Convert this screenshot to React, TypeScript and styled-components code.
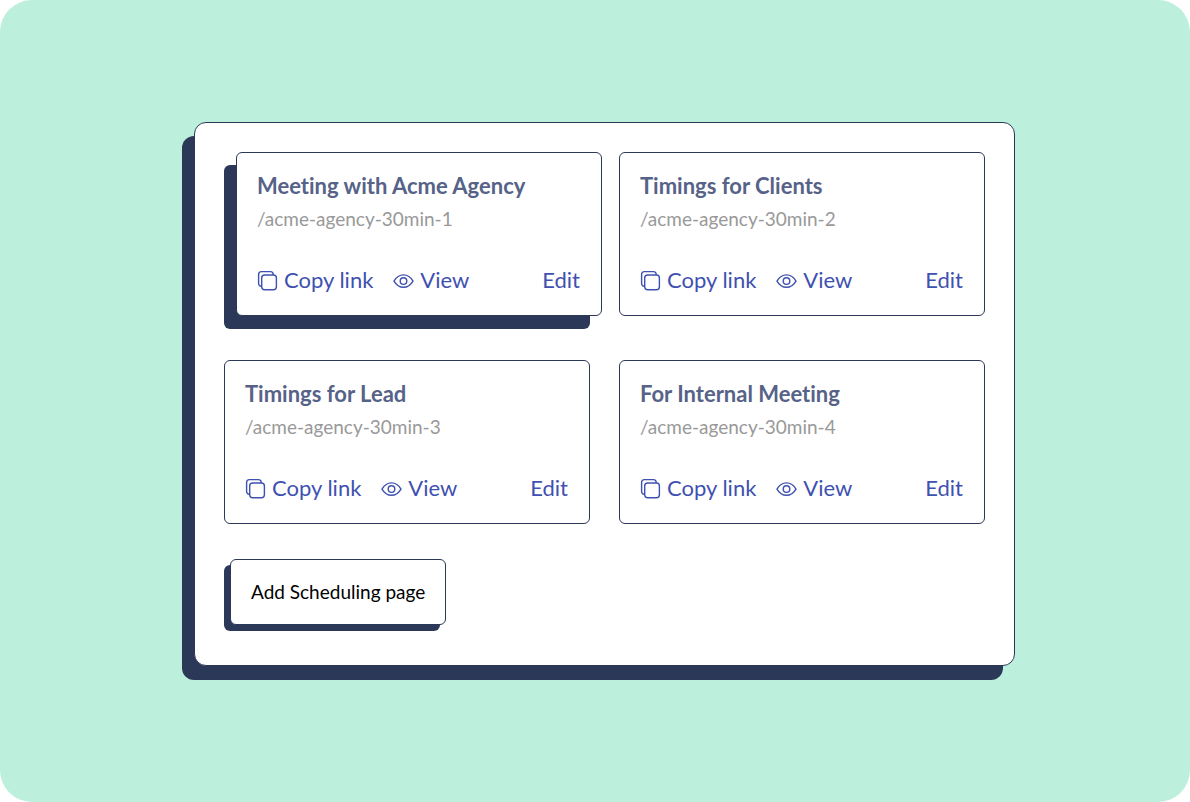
import React from "react";
import styled, { createGlobalStyle, css } from "styled-components";

const navy = "#2c3857";

const GlobalStyle = createGlobalStyle`
  *, *::before, *::after { box-sizing: border-box; }
  body { margin: 0; background: #ffffff; }
  body, button {
    font-family: Lato, "Open Sans", sans-serif;
    font-variant-ligatures: none;
  }
`;

const Page = styled.main`
  display: flex;
  align-items: flex-start;
  min-height: 100vh;
  padding: 122px 175px 136px 194px;
  border-radius: 32px;
  background: #bcf0dd;
`;

const Panel = styled.section`
  flex: 1;
  padding: 29px 29px 40px;
  border: 1px solid ${navy};
  border-radius: 12px;
  background: #ffffff;
  box-shadow: -12px 14px 0 ${navy};
`;

const CardGrid = styled.div`
  display: grid;
  grid-template-columns: repeat(2, minmax(0, 1fr));
  gap: 44px 29px;
`;

const Card = styled.article<{ $raised?: boolean }>`
  padding: 19px 21px 19px 20px;
  border: 1px solid ${navy};
  border-radius: 6px;
  background: #ffffff;
  ${({ $raised }) =>
    $raised &&
    css`
      margin: 0 -12px 0 12px;
      box-shadow: -12px 13px 0 ${navy};
    `}
`;

const CardTitle = styled.h2`
  margin: 0;
  color: #566287;
  font-size: 22px;
  line-height: 28px;
  font-weight: 700;
`;

const CardPath = styled.p`
  margin: 6px 0 32px;
  color: #999999;
  font-size: 19px;
  line-height: 26px;
`;

const Actions = styled.div`
  display: flex;
  align-items: center;
  gap: 20px;
`;

const Action = styled.button<{ $end?: boolean }>`
  display: flex;
  align-items: center;
  gap: 6px;
  margin-left: ${({ $end }) => ($end ? "auto" : "0")};
  padding: 0;
  border: 0;
  background: none;
  color: #3f51b0;
  font-size: 22px;
  line-height: 32px;
  cursor: pointer;

  svg { display: block; flex: none; }
`;

const AddButton = styled.button`
  display: block;
  margin: 35px 0 0 6px;
  padding: 19px 20px;
  border: 1px solid ${navy};
  border-radius: 6px;
  background: #ffffff;
  box-shadow: -6px 6px 0 ${navy};
  color: #000000;
  font-size: 19px;
  line-height: 26px;
  cursor: pointer;
`;

const CopyIcon = () => (
  <svg width="21" height="22" viewBox="0 0 21 22" fill="none" stroke="currentColor" strokeWidth="1.4" aria-hidden="true">
    <rect x="4.7" y="6" width="14.7" height="14.7" rx="3" />
    <path d="M4.7 17.2H4.2A2.6 2.6 0 0 1 1.6 14.6V5.4A2.8 2.8 0 0 1 4.4 2.6H13.4A2.8 2.8 0 0 1 16.2 5.4V6" />
  </svg>
);

const EyeIcon = () => (
  <svg width="21" height="22" viewBox="0 0 21 22" fill="none" stroke="currentColor" strokeWidth="1.4" aria-hidden="true">
    <path d="M1 12.1C3.4 8 6.7 5.9 10.5 5.9S17.6 8 20 12.1C17.6 16.2 14.3 18.3 10.5 18.3S3.4 16.2 1 12.1Z" />
    <circle cx="10.5" cy="12.1" r="3.3" />
  </svg>
);

const pages = [
  { title: "Meeting with Acme Agency", path: "/acme-agency-30min-1", raised: true },
  { title: "Timings for Clients", path: "/acme-agency-30min-2" },
  { title: "Timings for Lead", path: "/acme-agency-30min-3" },
  { title: "For Internal Meeting", path: "/acme-agency-30min-4" },
];

export default function App() {
  return (
    <>
      <GlobalStyle />
      <Page>
        <Panel>
          <CardGrid>
            {pages.map((page) => (
              <Card key={page.path} $raised={page.raised}>
                <CardTitle>{page.title}</CardTitle>
                <CardPath>{page.path}</CardPath>
                <Actions>
                  <Action type="button"><CopyIcon />Copy link</Action>
                  <Action type="button"><EyeIcon />View</Action>
                  <Action type="button" $end>Edit</Action>
                </Actions>
              </Card>
            ))}
          </CardGrid>
          <AddButton type="button">Add Scheduling page</AddButton>
        </Panel>
      </Page>
    </>
  );
}
